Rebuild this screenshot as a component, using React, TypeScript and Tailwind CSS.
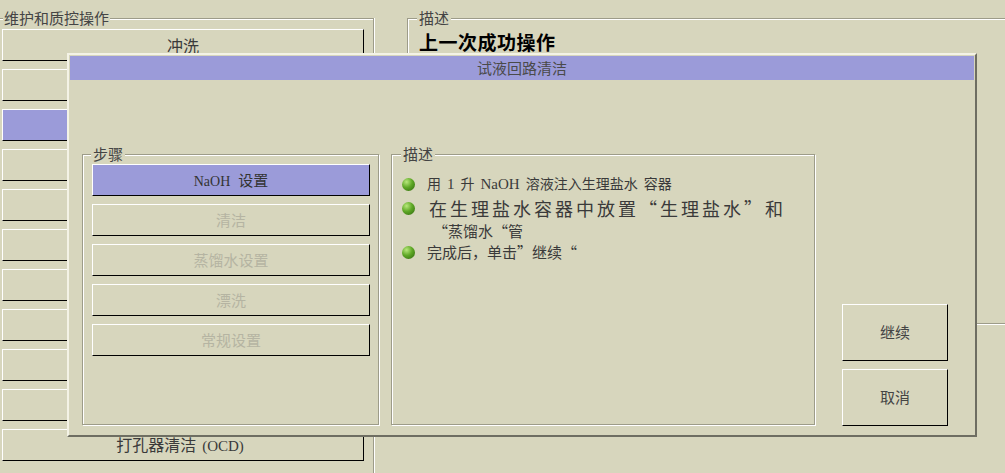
import React from "react";

const mainButtons = ["冲洗", "", "", "", "", "", "", "", "", "", "打孔器清洁"];

const steps = ["清洁", "蒸馏水设置", "漂洗", "常规设置"];

const Dot = ({ className = "" }: { className?: string }) => (
  <span
    className={`block w-[13px] h-[13px] shrink-0 rounded-full bg-[radial-gradient(circle_at_35%_30%,#b8e87c_0%,#5fa826_45%,#2c650c_100%)] ${className}`}
  />
);

// SimSun-like latin: narrow serif with half-width gaps around it
const Latin = ({ children, size = "text-[14px]" }: { children: React.ReactNode; size?: string }) => (
  <span className={`mx-[6px] font-['Liberation_Serif',serif] ${size}`}>{children}</span>
);

const RaisedButton = ({
  children,
  className = "",
}: {
  children?: React.ReactNode;
  className?: string;
}) => (
  <div
    className={`flex shrink-0 items-center justify-center border border-t-white border-l-white border-r-black border-b-black ${className}`}
  >
    <span className="whitespace-pre">{children}</span>
  </div>
);

export default function App() {
  return (
    <div
      lang="zh-CN"
      className="relative w-[1005px] h-[473px] overflow-hidden bg-[#d7d6bd] text-[#3a3a3a] font-['Noto_Sans_CJK_SC',sans-serif]"
    >
      {/* background screen */}
      <div className="flex pt-[18px]">
        <div className="relative shrink-0 w-[374px] h-[470px] border-t border-r border-[#9d9c89] shadow-[inset_0_1px_0_#fff,1px_0_0_#fff]">
          <span className="absolute left-[3px] -top-[10px] px-[1px] bg-[#d7d6bd] text-[15px] leading-[18px] text-[#444]">
            维护和质控操作
          </span>
          <div className="flex flex-col gap-[8px] pt-[10px] pl-[2px]">
            {mainButtons.map((label, i) => (
              <RaisedButton
                key={i}
                className={`w-[362px] h-[32px] text-[16px] ${i === 2 ? "bg-[#9b9bd9]" : ""}`}
              >
                {label}
                {i === 10 && <Latin size="text-[15px]">(OCD)</Latin>}
              </RaisedButton>
            ))}
          </div>
        </div>

        <div className="relative shrink-0 ml-[33px] w-[640px] h-[306px] border border-[#9d9c89] shadow-[inset_1px_1px_0_#fff,1px_1px_0_#fff]">
          <span className="absolute left-[9px] -top-[10px] px-[2px] bg-[#d7d6bd] text-[15px] leading-[18px] text-[#444]">
            描述
          </span>
          <div className="pt-[12px] pl-[11px] text-[19px] leading-[22px] font-bold tracking-[0.5px] text-black">
            上一次成功操作
          </div>
        </div>
      </div>

      {/* modal dialog */}
      <div className="absolute left-[67px] top-[53px] w-[910px] h-[384px] flex flex-col bg-[#d7d6bd] border-2 border-t-[#f4f3e6] border-l-[#f4f3e6] border-r-[#6e6e62] border-b-[#6e6e62]">
        <div className="mx-[1px] mt-[1px] h-[24px] shrink-0 flex items-center justify-center bg-[#9b9bd9] text-[15px] text-[#4a4a4a]">
          试液回路清洁
        </div>

        <div className="flex pt-[74px] pl-[13px]">
          {/* steps */}
          <div className="relative shrink-0 w-[297px] h-[271px] border border-[#9d9c89] shadow-[inset_1px_1px_0_#fff,1px_1px_0_#fff]">
            <span className="absolute left-[8px] -top-[10px] px-[2px] bg-[#d7d6bd] text-[15px] leading-[18px] text-[#444]">
              步骤
            </span>
            <div className="flex flex-col gap-[8px] pt-[9px] pl-[9px]">
              <RaisedButton className="w-[278px] h-[32px] bg-[#9b9bd9] text-[15px] text-[#333]">
                <span className="mr-[8px] font-['Liberation_Serif',serif] text-[14px]">NaOH</span>
                设置
              </RaisedButton>
              {steps.map((s) => (
                <RaisedButton key={s} className="w-[278px] h-[32px] text-[15px] text-[#b5b4a2]">
                  {s}
                </RaisedButton>
              ))}
            </div>
          </div>

          {/* description */}
          <div className="relative shrink-0 ml-[12px] w-[424px] h-[271px] border border-[#9d9c89] shadow-[inset_1px_1px_0_#fff,1px_1px_0_#fff]">
            <span className="absolute left-[9px] -top-[10px] px-[2px] bg-[#d7d6bd] text-[15px] leading-[18px] text-[#444]">
              描述
            </span>
            <div className="flex flex-col pt-[17px] pl-[10px] text-[#3a3a3a]">
              <div className="flex items-center h-[24px]">
                <Dot />
                <div className="ml-[12px] text-[14px]">
                  用<Latin size="text-[15px]">1</Latin>升<Latin size="text-[15px]">NaOH</Latin>溶液注入生理盐水
                  <span className="ml-[6px]">容器</span>
                </div>
              </div>
              <div className="flex items-start">
                <Dot className="mt-[6px]" />
                <div className="ml-[14px]">
                  <div className="text-[18px] leading-[25px] tracking-[3px]">
                    在生理盐水容器中放置“生理盐水”和
                  </div>
                  <div className="ml-[4px] text-[15px] leading-[19px]">“蒸馏水“管</div>
                </div>
              </div>
              <div className="flex items-center h-[24px]">
                <Dot />
                <div className="ml-[12px] text-[15px]">完成后，单击”继续“</div>
              </div>
            </div>
          </div>

          {/* actions */}
          <div className="flex flex-col gap-[8px] pt-[150px] ml-[27px]">
            <RaisedButton className="w-[106px] h-[57px] text-[15px] text-[#444]">继续</RaisedButton>
            <RaisedButton className="w-[106px] h-[57px] text-[15px] text-[#444]">取消</RaisedButton>
          </div>
        </div>
      </div>
    </div>
  );
}
